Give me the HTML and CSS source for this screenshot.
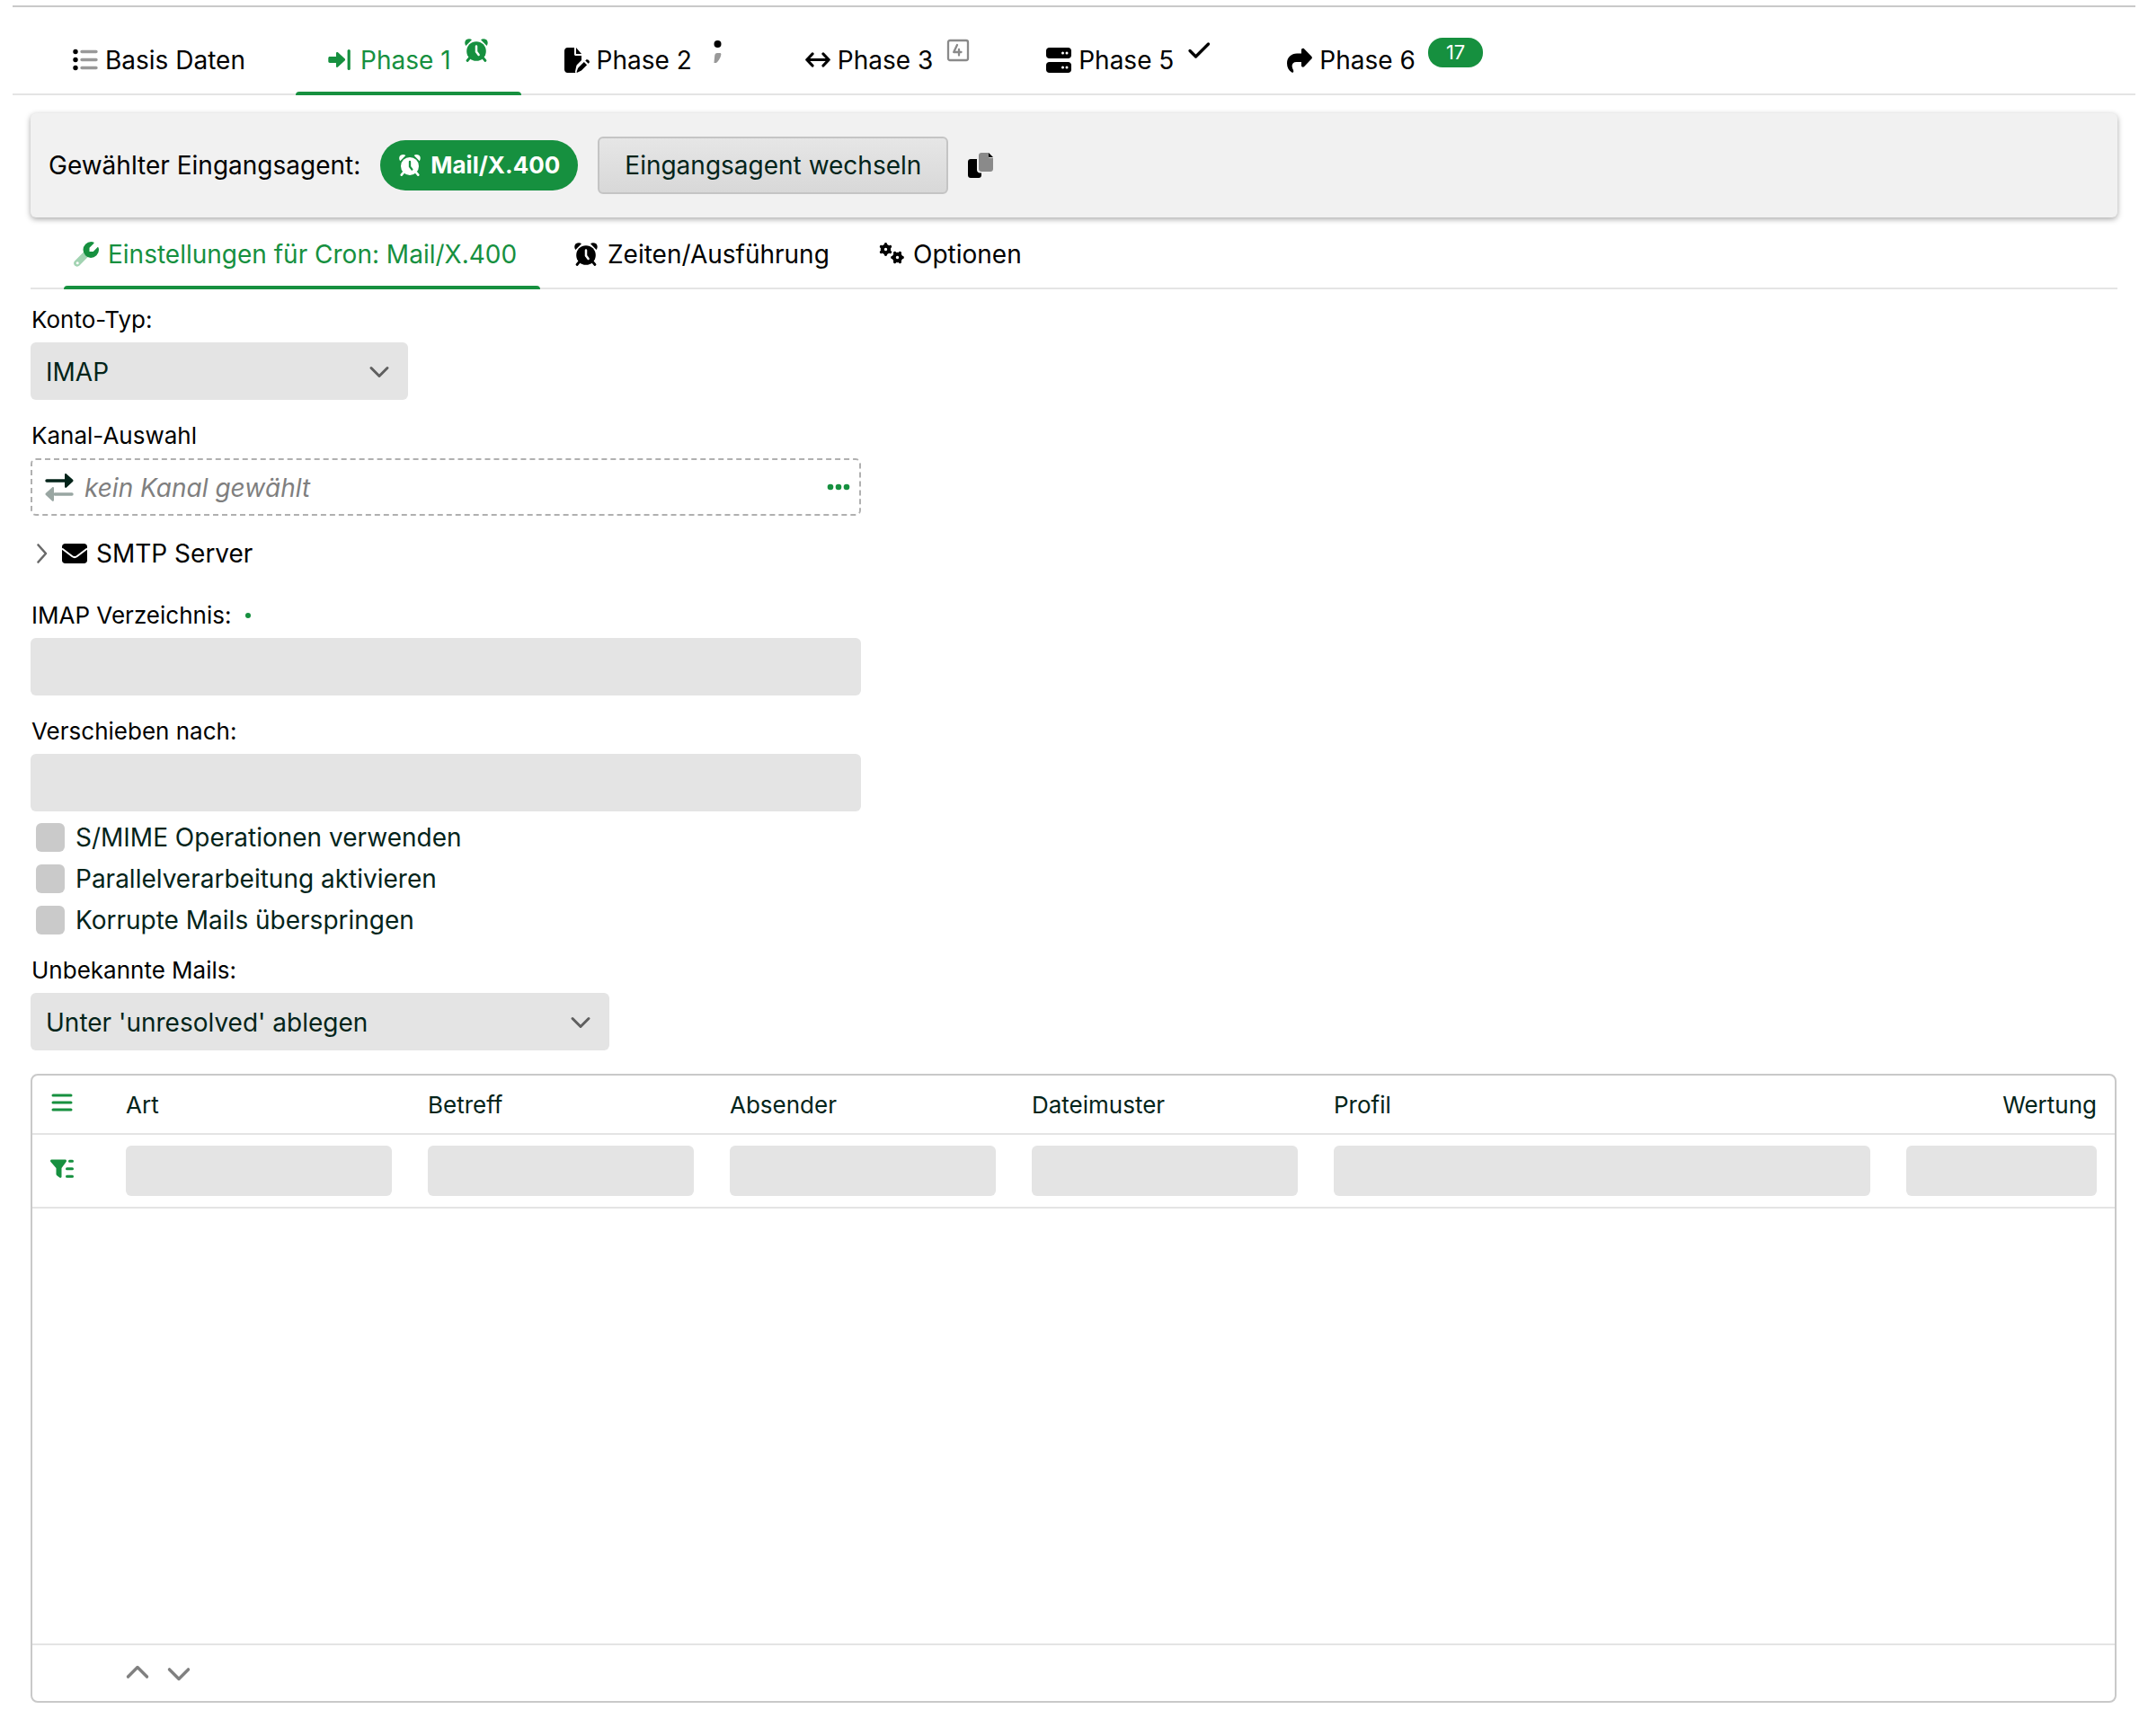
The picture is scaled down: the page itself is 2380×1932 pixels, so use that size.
FILE: index.html
```html
<!DOCTYPE html>
<html lang="de">
<head>
<meta charset="utf-8">
<title>Eingangsagent</title>
<link rel="stylesheet" href="styles.css">
</head>
<body>
<svg class="sprite" aria-hidden="true">
  <symbol id="clock" viewBox="0 0 28 28">
    <path d="M2.400 9C.2 5.800 1.200 1.200 6 1.200c1.200 0 2.200.4 3 1zM25.600 9C27.800 5.800 26.800 1.200 22 1.200c-1.200 0-2.200.4-3 1z"/>
    <circle cx="14" cy="15" r="10.800"/>
    <path class="line" d="M6.500 22.500 4 25.500M21.500 22.500 24 25.500" stroke-width="2.800"/>
    <path class="hand" d="M14 9.500v6l2.600 3.500"/>
  </symbol>
  <symbol id="chevron" viewBox="0 0 24 24"><path class="line" d="M3 8.500l9 9 9-9" stroke-width="3"/></symbol>
</svg>

<main class="page">
  <nav class="tabs phases" role="tablist" aria-label="Phasen">
    <button class="tab" role="tab">
      <svg class="icon" viewBox="0 0 28 28"><circle cx="3" cy="4.500" r="2.700"/><circle cx="3" cy="13.500" r="2.700"/><circle cx="3" cy="22.500" r="2.700"/><path class="line faint" d="M10 4.500h16M10 13.500h16M10 22.500h16" stroke-width="3.400"/></svg>
      <span>Basis Daten</span>
    </button>
    <button class="tab active" role="tab" aria-selected="true">
      <svg class="icon" viewBox="0 0 28 28"><path d="M2 10h7V6.200c0-1.200 1.200-1.700 2-.9l7.600 7c.7.7.7 1.600 0 2.300l-7.600 7c-.8.8-2 .3-2-.9V17H2c-1 0-1.700-.7-1.700-1.700v-3.600C.3 10.700 1 10 2 10z"/><path class="line" d="M23.200 3.500v20" stroke-width="3.200"/></svg>
      <span>Phase 1</span>
      <svg class="icon mark"><use href="#clock"/></svg>
    </button>
    <button class="tab" role="tab">
      <svg class="icon" viewBox="0 0 28 28"><path d="M0 3.500C0 1.600 1.500 0 3.500 0H11v7.500c0 .9.700 1.500 1.500 1.500H19v5l-4.700 4.700c-.5.5-.9 1.200-1 1.900L12 26.500c-.1.600 0 1.100.4 1.500H3.500C1.500 28 0 26.400 0 24.500zM13 0l6 7h-6z"/><path d="M15.600 20.200l6.200-6.200 3.300 3.300-6.200 6.200c-.3.300-.6.500-1 .6l-3.600 1.600c-.5.200-.9-.2-.7-.8l1.300-3.700c.1-.4.300-.7.700-1zM23.300 12.500l.9-.9c1.600-1.500 4.900 1.600 3.300 3.300l-.9.9z" transform="translate(0 2)"/></svg>
      <span>Phase 2</span>
      <svg class="icon mark" viewBox="0 0 28 28"><circle cx="14.500" cy="7" r="4"/><path class="faint" d="M14 17h3c1 0 1.600.800 1.300 2-.800 4-3 7.500-6 9.500-1 .6-1.900 0-1.800-1l.7-7.500c.2-2 1.300-3 2.800-3z"/></svg>
    </button>
    <button class="tab" role="tab">
      <svg class="icon" viewBox="0 0 28 28"><path class="line" d="M2 13.500h24M8 7l-6.200 6.500L8 20M20 7l6.200 6.500L20 20" stroke-width="3.200"/></svg>
      <span>Phase 3</span>
      <svg class="icon mark grey" viewBox="0 0 28 28"><path class="line" d="M5 3h18a2 2 0 0 1 2 2v18a2 2 0 0 1-2 2H5a2 2 0 0 1-2-2V5a2 2 0 0 1 2-2zM13 8l-3.800 8h8.300M15 13v6.500" stroke-width="2.300"/></svg>
    </button>
    <button class="tab" role="tab">
      <svg class="icon" viewBox="0 0 28 28"><path fill-rule="evenodd" d="M3.500 0h21C26.500 0 28 1.500 28 3.500v5c0 2-1.500 3.500-3.500 3.500h-21C1.500 12 0 10.500 0 8.500v-5C0 1.500 1.500 0 3.500 0zm15 4.500a1.500 1.500 0 1 0 0 3 1.500 1.500 0 0 0 0-3zm4.500 0a1.500 1.500 0 1 0 0 3 1.500 1.500 0 0 0 0-3zM3.500 16h21c2 0 3.500 1.500 3.500 3.500v5c0 2-1.500 3.500-3.500 3.500h-21C1.500 28 0 26.500 0 24.500v-5c0-2 1.500-3.500 3.500-3.500zm15 4.500a1.500 1.500 0 1 0 0 3 1.500 1.500 0 0 0 0-3zm4.500 0a1.500 1.500 0 1 0 0 3 1.500 1.500 0 0 0 0-3z"/></svg>
      <span>Phase 5</span>
      <svg class="icon mark" viewBox="0 0 28 28"><path class="line" d="M4 14.500l6.500 6.500L24.500 7" stroke-width="3.300"/></svg>
    </button>
    <button class="tab" role="tab">
      <svg class="icon" viewBox="0 0 28 28"><path d="M16 2.500c0-1.500 1.800-2.300 3-1.300l8.300 8.600c.8.800.8 2 0 2.800L19 21.200c-1.200 1-3 .2-3-1.300V16h-5.500c-4 0-5.700 3-4.500 6.500.5 1.700 1.300 2.500 1.300 3.800 0 1.300-1 1.900-2 1.200C2 25.500 0 22 0 17.500 0 10.500 5 6.500 11 6.500h5z"/></svg>
      <span>Phase 6</span>
      <span class="count">17</span>
    </button>
  </nav>

  <div class="content">
    <section class="agent">
      <span>Gewählter Eingangsagent:</span>
      <span class="pill"><svg class="icon small"><use href="#clock"/></svg>Mail/X.400</span>
      <button class="change">Eingangsagent wechseln</button>
      <button class="plain" aria-label="Kopieren"><svg class="icon" viewBox="0 0 28 28"><path d="M3 7h7v12c0 2 1.500 3.500 3.500 3.500H15V25c0 1.700-1.300 3-3 3H3c-1.700 0-3-1.300-3-3V10c0-1.700 1.300-3 3-3z"/><path class="grey" d="M15 0h8v4.500c0 .8.600 1.300 1.300 1.300H28V18c0 1.700-1.300 3-3 3H15c-1.700 0-3-1.300-3-3V3c0-1.700 1.300-3 3-3z"/><path d="M23 0l5 5h-4c-.6 0-1-.4-1-1z"/></svg></button>
    </section>

    <nav class="tabs settings" role="tablist" aria-label="Einstellungen">
      <button class="tab active" role="tab" aria-selected="true">
        <svg class="icon" viewBox="0 0 28 28"><path class="faint" fill-rule="evenodd" d="M11 11.500L1.300 21.200c-1.700 1.700-1.700 3.800-.2 5.300s3.800 1.500 5.300 0L16 16.800c-2.500-1-4.200-2.800-5-5.300zM4.200 22.300a1.500 1.500 0 1 1 0 3 1.500 1.500 0 0 1 0-3z"/><path d="M22 .6c.7.200.8.900.3 1.400l-4.800 4.800v4.200h4.200l4.500-4.600c.5-.5 1.200-.4 1.400.3.300.9.400 1.500.4 2.300a9 9 0 0 1-9 9A9 9 0 0 1 10.500 9 9 9 0 0 1 19.500 0c.9 0 1.700.2 2.500.6z"/></svg>
        <span>Einstellungen für Cron: Mail/X.400</span>
      </button>
      <button class="tab" role="tab">
        <svg class="icon"><use href="#clock"/></svg>
        <span>Zeiten/Ausführung</span>
      </button>
      <button class="tab" role="tab">
        <svg class="icon" viewBox="0 0 28 28"><g class="line"><circle cx="7.500" cy="8.500" r="3.700" stroke-width="4"/><circle cx="20.500" cy="17.500" r="3.700" stroke-width="4"/><path d="M7.500 3.100v-.3M7.500 13.900v.3M2.700 5.700l-.2-.1M12.300 5.700l.2-.1M2.700 11.300l-.2.100M12.300 11.300l.2.100M15.100 17.500h-.3M25.900 17.500h.3M17.700 12.700l-.1-.2M23.300 12.700l.1-.2M17.700 22.300l-.1.200M23.300 22.300l.1.200" stroke-width="3.400"/></g></svg>
        <span>Optionen</span>
      </button>
    </nav>

    <form class="form">
      <div class="field short">
        <label for="typ">Konto-Typ:</label>
        <div class="select"><select id="typ"><option>IMAP</option></select><svg class="arrow"><use href="#chevron"/></svg></div>
      </div>
      <div class="field">
        <label for="kanal">Kanal-Auswahl</label>
        <div class="picker">
          <svg class="swap" viewBox="0 0 32 32"><path class="line" d="M2 9h20" stroke-width="3.400"/><path d="M22 2.500c0-1.300 1.200-1.800 2-1l7 6.300c.7.700.7 1.600 0 2.300l-7 6.400c-.8.800-2 .3-2-1z"/><g class="faint"><path class="line" d="M11 24h19" stroke-width="3.400"/><path d="M10 17.500c0-1.300-1.200-1.800-2-1l-7 6.300c-.7.700-.7 1.600 0 2.300l7 6.400c.8.800 2 .3 2-1z"/></g></svg>
          <input id="kanal" type="text" placeholder="kein Kanal gewählt" readonly>
          <button class="plain more" type="button" aria-label="Kanal wählen"><svg class="dots" viewBox="0 0 26 8"><circle cx="4" cy="4" r="3.300"/><circle cx="13" cy="4" r="3.300"/><circle cx="22" cy="4" r="3.300"/></svg></button>
        </div>
      </div>
      <button class="plain disclosure" type="button" aria-expanded="false">
        <svg class="fold" viewBox="0 0 16 24"><path class="line" d="M3.500 2.500l8.500 9.500-8.500 9.500" stroke-width="2.600"/></svg>
        <svg class="icon" viewBox="0 0 28 28"><path d="M3.500 3h21C26.500 3 28 4.500 28 6.500v15c0 2-1.500 3.500-3.500 3.500h-21C1.500 25 0 23.500 0 21.500v-15C0 4.500 1.500 3 3.500 3z"/><path class="flap" d="M0 8.500l11.500 8.700c1.500 1.100 3.500 1.100 5 0L28 8.500"/></svg>
        <span>SMTP Server</span>
      </button>
      <div class="field">
        <label for="dir">IMAP Verzeichnis: <span class="required"></span></label>
        <input class="box" id="dir" type="text">
      </div>
      <div class="field">
        <label for="move">Verschieben nach:</label>
        <input class="box" id="move" type="text">
      </div>
      <div class="checks">
        <label><input type="checkbox">S/MIME Operationen verwenden</label>
        <label><input type="checkbox">Parallelverarbeitung aktivieren</label>
        <label><input type="checkbox">Korrupte Mails überspringen</label>
      </div>
      <div class="field medium">
        <label for="unknown">Unbekannte Mails:</label>
        <div class="select"><select id="unknown"><option>Unter 'unresolved' ablegen</option></select><svg class="arrow"><use href="#chevron"/></svg></div>
      </div>
    </form>

    <section class="grid">
      <table>
        <colgroup><col class="c-tool"><col class="c-std"><col class="c-std"><col class="c-std"><col class="c-std"><col><col class="c-rank"></colgroup>
        <thead>
          <tr>
            <td><button class="plain green" aria-label="Menü"><svg class="icon small" viewBox="0 0 26 26"><path class="line" d="M3 3h20M3 11h20M3 19h20" stroke-width="3"/></svg></button></td>
            <th>Art</th><th>Betreff</th><th>Absender</th><th>Dateimuster</th><th>Profil</th><th class="right">Wertung</th>
          </tr>
          <tr class="filters">
            <td><button class="plain green" aria-label="Filter"><svg class="icon small" viewBox="0 0 26 26"><path d="M1.500.5h15c1.300 0 1.900 1.400 1.100 2.400L12.500 10v9.500c0 1.200-1.200 1.700-2.200 1l-3-2.300c-.5-.4-.8-.8-.8-1.400V10L.4 2.900C-.4 1.900.2.5 1.500.5z"/><path class="line" d="M21.500 2.200h3M18.500 10.700h6M18.500 19.200h6" stroke-width="3"/></svg></button></td>
            <td><input class="box" aria-label="Filter Art"></td>
            <td><input class="box" aria-label="Filter Betreff"></td>
            <td><input class="box" aria-label="Filter Absender"></td>
            <td><input class="box" aria-label="Filter Dateimuster"></td>
            <td><input class="box" aria-label="Filter Profil"></td>
            <td><input class="box" aria-label="Filter Wertung"></td>
          </tr>
        </thead>
      </table>
      <div class="rows"></div>
      <footer class="footer">
        <button class="plain" aria-label="Nach oben"><svg class="step up"><use href="#chevron"/></svg></button>
        <button class="plain" aria-label="Nach unten"><svg class="step"><use href="#chevron"/></svg></button>
      </footer>
    </section>
  </div>
</main>
</body>
</html>
```

FILE: styles.css
```css
:root {
  --green: #16903f;
  --ink: #03241a;
  --field: #e4e4e4;
  --rule: #e4e4e4;
  --edge: #c9c9c9;
}

* { box-sizing: border-box; }

body {
  margin: 0;
  background: #fff;
  color: #000;
  font: 400 28px/40px Inter, "Liberation Sans", sans-serif;
  font-optical-sizing: none;
}

button, input, select {
  margin: 0;
  border: 0;
  padding: 0;
  background: none;
  color: inherit;
  font: inherit;
  font-optical-sizing: none;
}

svg { display: block; flex: none; fill: currentColor; }
.sprite { position: absolute; width: 0; height: 0; }
.line { fill: none; stroke: currentColor; stroke-linecap: round; stroke-linejoin: round; }
.faint { opacity: .4; }
.grey { color: #8a8a8a; fill: #8a8a8a; }
.green { color: var(--green); }
.hand { fill: none; stroke: var(--hand, #fff); stroke-width: 2.5; stroke-linecap: round; }
.flap { fill: none; stroke: #fff; stroke-width: 2; }
.icon { width: 28px; height: 28px; }
.icon.small { width: 26px; height: 26px; }
.plain { display: flex; align-items: center; }

.page {
  display: flex;
  flex-direction: column;
  min-height: 100vh;
  padding: 6px 4px 37px 14px;
}

/* Tab bars */
.tabs { display: flex; box-shadow: inset 0 -2px var(--rule); }
.tab { position: relative; display: flex; align-items: center; white-space: nowrap; }
.tab.active { color: var(--green); }
.tab.active::after {
  content: "";
  position: absolute;
  inset: auto 0 0;
  height: 4px;
  border-radius: 4px 4px 0 0;
  background: var(--green);
}

.phases { gap: 12px; border-top: 2px solid var(--edge); padding-left: 31px; }
.phases .tab { gap: 8px; height: 98px; padding: 34px 36px 14px; }
.phases .tab:first-child { min-width: 272px; }
.mark, .count { align-self: flex-start; margin-left: 6px; }
.count {
  border-radius: 16px;
  padding: 0 20px;
  background: var(--green);
  color: #fff;
  font-size: 22px;
  line-height: 33px;
}

.settings { display: grid; grid-template-columns: 530px 314px max-content; gap: 26px; padding-left: 37px; }
.settings .tab { gap: 10px; height: 80px; padding: 2px 11px 0; }

.content { display: flex; flex: 1; flex-direction: column; padding: 20px 20px 0; }

/* Chosen agent */
.agent {
  display: flex;
  align-items: center;
  gap: 22px;
  border-radius: 6px;
  padding: 26px 20px;
  background: #f1f1f1;
  box-shadow: 0 2px 6px rgba(0, 0, 0, .35);
}
.pill {
  --hand: var(--green);
  display: flex;
  align-items: center;
  gap: 10px;
  border-radius: 28px;
  padding: 8px 20px;
  background: var(--green);
  color: #fff;
  font-size: 26px;
  font-weight: 700;
}
.change {
  height: 64px;
  border: 2px solid #c4c4c4;
  border-radius: 6px;
  padding: 0 28px;
  background: linear-gradient(#e6e6e6, #d8d8d8);
  color: var(--ink);
}

/* Form */
.form { display: flex; flex-direction: column; align-items: flex-start; padding-top: 19px; }
.field { display: flex; flex-direction: column; gap: 10px; width: 924px; max-width: 100%; }
.field.short { width: 420px; }
.field.medium { width: 644px; }
.field + .field, .checks + .field { margin-top: 25px; }
.field > label { display: flex; align-items: center; gap: 16px; padding-left: 1px; font-size: 26px; line-height: 30px; }
.required { width: 6px; height: 6px; border-radius: 50%; background: var(--green); }
.box { width: 100%; height: 64px; border-radius: 6px; padding: 0 16px; background: var(--field); color: var(--ink); }

.select { display: grid; align-items: center; color: var(--ink); }
.select > * { grid-area: 1 / 1; }
.select select { width: 100%; height: 64px; border-radius: 6px; padding: 2px 56px 0 17px; background: var(--field); appearance: none; }
.arrow { justify-self: end; width: 24px; height: 24px; margin-right: 20px; color: #5f5f5f; pointer-events: none; }

.picker {
  display: flex;
  align-items: center;
  gap: 12px;
  height: 64px;
  border: 2px dashed #b0b0b0;
  border-radius: 6px;
  padding: 0 10px 0 14px;
  color: var(--ink);
}
.picker input { flex: 1; min-width: 0; padding-top: 2px; font-style: italic; }
.picker input::placeholder { color: #7f7f7f; opacity: 1; }
.swap { width: 32px; height: 32px; }
.more { color: var(--green); }
.dots { width: 26px; height: 8px; }

.disclosure { gap: 10px; margin: 22px 0 34px 5px; }
.fold { width: 16px; height: 24px; margin-right: 4px; color: #6a6a6a; }

.checks { display: flex; flex-direction: column; gap: 14px; margin-top: 13px; padding-left: 6px; color: var(--ink); }
.checks label { display: flex; align-items: center; gap: 12px; height: 32px; }
.checks input { width: 32px; height: 32px; border-radius: 6px; background: #cacaca; appearance: none; }

/* Rules table */
.grid {
  display: flex;
  flex: 1;
  flex-direction: column;
  margin: 26px 1px 0 0;
  border: 2px solid var(--edge);
  border-radius: 8px;
  color: var(--ink);
}
table { width: 100%; border-spacing: 0; table-layout: fixed; }
.c-tool { width: 84px; }
.c-std { width: 336px; }
.c-rank { width: 252px; }
th, td { height: 66px; border-bottom: 2px solid var(--rule); padding: 0 20px; text-align: left; vertical-align: middle; }
th { padding-top: 2px; font-size: 26px; font-weight: 400; line-height: 30px; }
.right { text-align: right; }
.filters td { height: 82px; }
.filters .box { display: block; height: 56px; }
.rows { flex: 1; min-height: 200px; }
.footer { display: flex; align-items: center; gap: 18px; height: 64px; border-top: 2px solid var(--rule); padding-left: 103px; color: #808080; }
.step { width: 28px; height: 28px; }
.up { transform: rotate(180deg); }
```
